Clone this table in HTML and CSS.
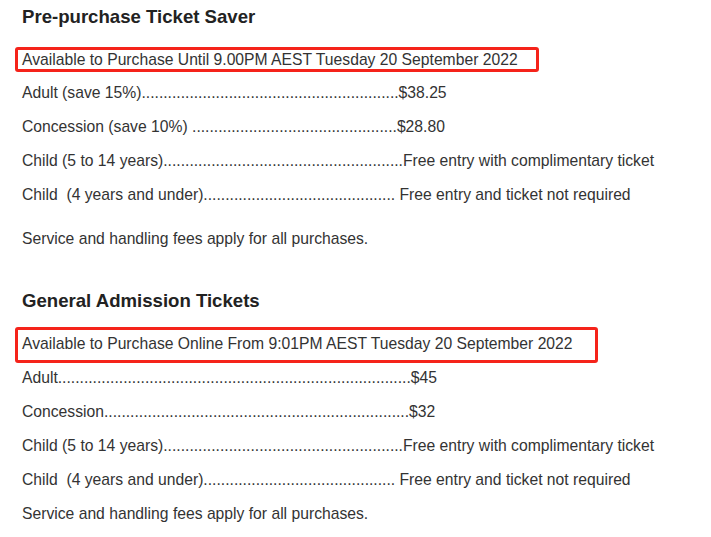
FILE: index.html
```html
<!DOCTYPE html>
<html>
<head>
<meta charset="utf-8">
<link rel="stylesheet" href="styles.css">
</head>
<body>
<div class="page">
  <section class="section">
    <h2 class="title">Pre-purchase Ticket Saver</h2>
    <div class="note note-1">Available to Purchase Until 9.00PM AEST Tuesday 20 September 2022</div>
    <div class="rows">
      <p class="row">Adult (save 15%)...........................................................$38.25</p>
      <p class="row">Concession (save 10%) ...............................................$28.80</p>
      <p class="row">Child (5 to 14 years).......................................................Free entry with complimentary ticket</p>
      <p class="row">Child&nbsp; (4 years and under)............................................ Free entry and ticket not required</p>
    </div>
    <p class="fees">Service and handling fees apply for all purchases.</p>
  </section>
  <section class="section section-2">
    <h2 class="title">General Admission Tickets</h2>
    <div class="note note-2">Available to Purchase Online From 9:01PM AEST Tuesday 20 September 2022</div>
    <div class="rows rows-2">
      <p class="row">Adult.................................................................................$45</p>
      <p class="row">Concession......................................................................$32</p>
      <p class="row">Child (5 to 14 years).......................................................Free entry with complimentary ticket</p>
      <p class="row">Child&nbsp; (4 years and under)............................................ Free entry and ticket not required</p>
      <p class="row">Service and handling fees apply for all purchases.</p>
    </div>
  </section>
</div>
</body>
</html>
```
FILE: styles.css
```css
html, body {
  margin: 0;
  padding: 0;
  background: #ffffff;
}
body {
  font-family: "Liberation Sans", Arial, sans-serif;
  color: #333333;
  font-size: 15.7px;
}
.page {
  padding-left: 22px;
}
.section {
  display: flex;
  flex-direction: column;
  align-items: flex-start;
}
.section-2 {
  margin-top: 28px;
}
.title {
  margin: 0;
  font-size: 18.6px;
  line-height: 34px;
  font-weight: bold;
  color: #222222;
}
.note {
  margin-left: -7px;
  border: 3px solid #f5231a;
  border-radius: 3px;
  padding: 0 4px;
  line-height: 19px;
  white-space: nowrap;
}
.note-1 {
  margin-top: 13px;
  width: 510px;
}
.note-2 {
  margin-top: 9px;
  width: 569px;
  padding-top: 4px;
  padding-bottom: 7px;
}
.rows {
  margin-top: 4px;
}
.rows-2 {
  margin-top: -2px;
}
.row {
  margin: 0;
  line-height: 34px;
  white-space: nowrap;
}
.fees {
  margin: 10px 0 0;
  line-height: 34px;
}
```
